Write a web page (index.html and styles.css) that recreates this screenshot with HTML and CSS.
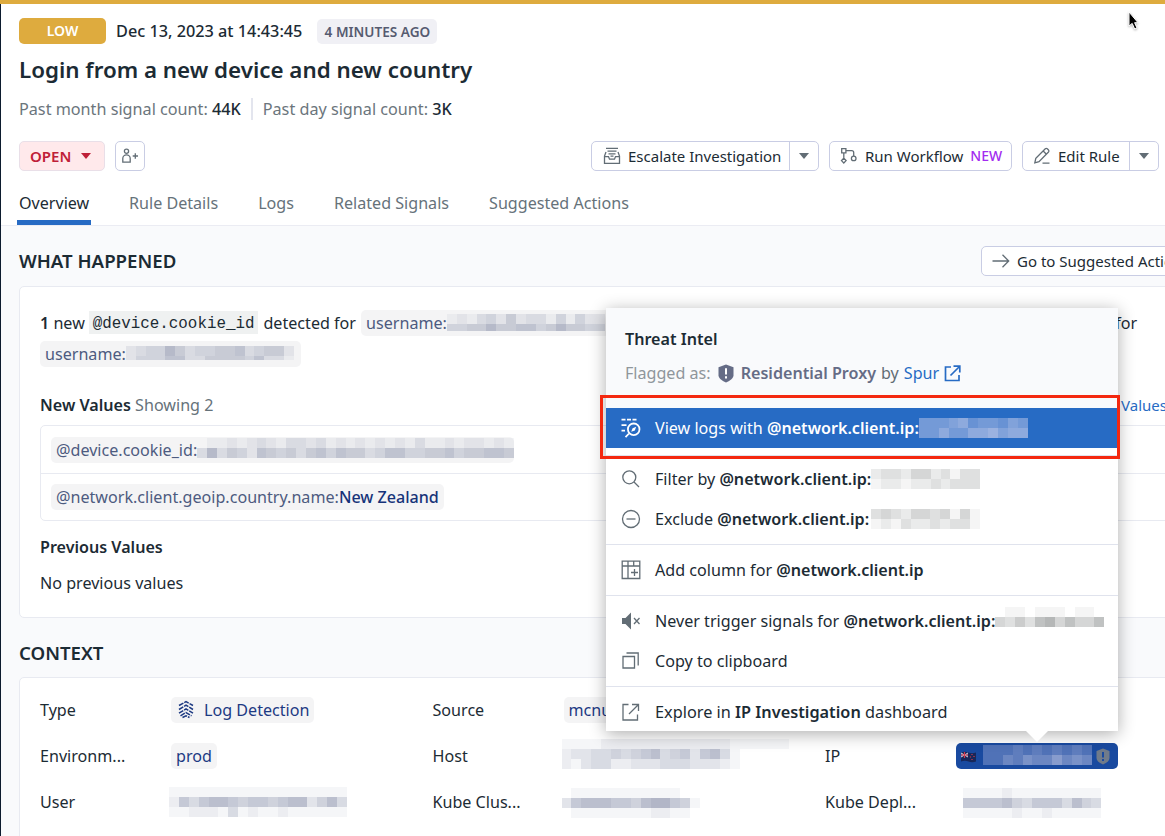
FILE: index.html
```html
<!DOCTYPE html>
<html lang="en">
<head>
<meta charset="utf-8">
<title>Login from a new device and new country</title>
<link rel="stylesheet" href="styles.css">
</head>
<body>
<div class="page">
  <header class="header">
    <div class="meta">
      <span class="severity">LOW</span>
      <span class="date">Dec 13, 2023 at 14:43:45</span>
      <span class="ago">4 MINUTES AGO</span>
    </div>
    <h1 class="title">Login from a new device and new country</h1>
    <div class="stats">
      <span>Past month signal count: <b>44K</b></span>
      <span class="stat-second">Past day signal count: <b>3K</b></span>
    </div>
    <div class="toolbar">
      <button class="status">OPEN <i class="caret"></i></button>
      <button class="btn assign">
        <svg width="18" height="18" viewBox="0 0 18 18"><circle cx="5.5" cy="4.2" r="2.1"/><path d="M1.800 15.200v-3.800a3.700 3.500 0 0 1 7.400 0v3.800zM11.700 9h5.300M14.300 6.300v5.400"/></svg>
      </button>
      <div class="actions">
        <div class="btn split escalate">
          <span class="main"><svg width="18" height="18" viewBox="0 0 18 18"><path d="M3 1.300h12M4.500 4.200h9M3 5 1.500 9v7.300h15V9L15 5M5.500 6.800h7M1.500 9.600h4l1 2.600h5l1-2.600h4M7.500 9.200h3"/></svg><span class="label">Escalate Investigation</span></span>
          <span class="drop"><i class="caret"></i></span>
        </div>
        <div class="btn workflow">
          <svg width="18" height="18" viewBox="0 0 18 18"><path d="M1.700 1.700h4.200v4.200H1.700zM3.800 6v5.300M3.800 11.200l2.300 2.400-2.300 2.400-2.300-2.400zM6 3.600h5.700a2 2 0 0 1 2 2V9"/><circle cx="13.700" cy="11.400" r="2.300"/></svg>
          <span class="label">Run Workflow</span><span class="new">NEW</span>
        </div>
        <div class="btn split edit">
          <span class="main"><svg width="18" height="18" viewBox="0 0 18 18"><path d="M1.800 15.800l1-4.500L12.300 1.800a1.500 1.500 0 0 1 2 0l1.200 1.200a1.500 1.500 0 0 1 0 2L6 14.600zM10.200 4l3.200 3.200M9.500 16.200h7"/></svg><span class="label">Edit Rule</span></span>
          <span class="drop"><i class="caret"></i></span>
        </div>
      </div>
    </div>
    <nav class="tabs">
      <a class="tab active">Overview</a><a class="tab">Rule Details</a><a class="tab">Logs</a><a class="tab">Related Signals</a><a class="tab">Suggested Actions</a>
    </nav>
  </header>

  <main class="content">
    <div class="section-head">
      <h2>WHAT HAPPENED</h2>
      <div class="btn goto"><svg width="18" height="18" viewBox="0 0 18 18"><path d="M.5 9h16M10.500 2.800 16.700 9l-6.200 6.200"/></svg><span class="label">Go to Suggested Actions</span></div>
    </div>
    <section class="card happened">
      <div class="line"><span><b>1</b> new</span> <code>@device.cookie_id</code> <span>detected for</span>
        <span class="chip key first-user">username:<span class="mosaic" data-heights="10 7" data-rows="1213425233141422,4455755664575544"></span></span>
        <span class="line-end">for</span></div>
      <div class="line"><span class="chip key second-user">username:<span class="mosaic" data-heights="10 4" data-rows="23447534455634552,24446633555546331"></span></span></div>
      <div class="values-head"><span><b>New Values</b> Showing 2</span><a class="link">View All New Values</a></div>
      <div class="table">
        <div class="tr"><span class="chip key cookie">@device.cookie_id:<span class="mosaic" data-rows="01121232133231212121213112122121,37354265453564655346644556455665"></span></span></div>
        <div class="tr"><span class="chip key">@network.client.geoip.country.name:<em>New Zealand</em></span></div>
      </div>
      <div class="prev-head">Previous Values</div>
      <div class="prev-body">No previous values</div>
    </section>

    <h2 class="context-head">CONTEXT</h2>
    <section class="card context">
      <div class="field"><span class="name">Type</span><span class="chip type"><svg width="18" height="20" viewBox="0 0 18 20"><path d="M2 5.500 9 1.700l7 3.800M2 9.500l7-4.300 7 4.300M2 13.200l7-4.300 7 4.300M3.500 15.800 9 12.500l5.500 3.300M5.500 17.500 9 15.800l3.500 1.700" stroke-dasharray="5 1"/></svg>Log Detection</span></div>
      <div class="field"><span class="name">Source</span><span class="chip">mcnulty</span></div>
      <div class="field"></div>
      <div class="field"><span class="name">Environm...</span><span class="chip">prod</span></div>
      <div class="field"><span class="name">Host</span><span class="mosaic host" data-heights="10 10 10 9" data-rows="11112222222222222111111,23344545674563674100000,21344223334443332100000,00000000000000000000000"></span></div>
      <div class="field"><span class="name">IP</span><span class="chip ip">
        <svg class="flag" width="15" height="12" viewBox="0 0 15 12"><path class="flag-bg" d="M0 1.500q4-1.500 7.500 0t7.500 0v9q-4 1.500-7.500 0T0 10.500z"/><path class="flag-white" d="M0 2l7 4M7 2 0 6M3.500 1v6M0 4h7"/><path class="flag-red" d="M3.500 1v6M0 4h7M11 3v1M13 5v1M11 8v1M9.500 5.500v1"/></svg>
        <span class="mosaic blue" data-rows="44454545454,44657668676"></span>
        <svg class="shield" width="14" height="17" viewBox="0 0 14 17"><path d="M7 .5 13.500 3v7c0 3-3 5-6.500 6.500C3.500 15 .5 13 .5 10V3z"/><path class="bang" d="M7 4v5.500M7 11v2"/></svg>
      </span></div>
      <div class="field"><span class="name">User</span><span class="mosaic user" data-rows="1111111111111111110,2646776566567735740,1122214121121111110"></span></div>
      <div class="field"><span class="name">Kube Clus...</span><span class="mosaic kube" data-rows="01111111111100,36777665788651,01111111122110"></span></div>
      <div class="field"><span class="name">Kube Depl...</span><span class="mosaic depl" data-rows="0111121111111110,0666675466647540,0111112112111110"></span></div>
    </section>
  </main>

  <div class="popup">
    <div class="intel">
      <div class="intel-title">Threat Intel</div>
      <div class="flagged"><span class="muted">Flagged as:</span><svg class="shield-lg" width="16" height="19" viewBox="0 0 16 19"><path d="M8 .5 15.500 3.300v8c0 3-3 5.200-7.500 7.200C3.500 16.500.5 14.300.5 11.300v-8z"/><path class="bang" d="M8 4.200v6.300M8 12.200v2.400"/></svg><b>Residential Proxy</b><span>by</span><a class="link">Spur</a><svg class="ext" width="17" height="17" viewBox="0 0 17 17"><path d="M7 2H1.500v13.500H15V10M6.500 10.500l9-9M9.500 1.200h6.300v6.300"/></svg></div>
    </div>
    <div class="item selected">
      <svg width="20" height="20" viewBox="0 0 20 20"><path d="M.5 1.700h4M6 1.700h4M11.500 1.700h4M.5 7.200h5M.5 12.700h3.500M8 15.500l-3.500 3.700"/><circle cx="12.700" cy="11.300" r="5.800"/><path class="needle" d="m10.200 13.800 1.400-3.600 3.600-1.400-1.400 3.600z"/></svg>
      <span>View logs with <b>@network.client.ip:</b></span><span class="mosaic blue" data-rows="66678566576,66866889788"></span>
    </div>
    <div class="group">
      <div class="item"><svg width="20" height="20" viewBox="0 0 20 20"><circle cx="8.300" cy="8.300" r="6.500"/><path d="m13 13 5 5"/></svg><span>Filter by <b>@network.client.ip:</b></span><span class="mosaic gray" data-rows="23324423133,12212232333"></span></div>
      <div class="item exclude"><svg width="20" height="20" viewBox="0 0 20 20"><circle cx="10" cy="10" r="8.500"/><path d="M5.500 10h9"/></svg><span>Exclude <b>@network.client.ip:</b></span><span class="mosaic gray" data-rows="34324434141,12132232331"></span></div>
    </div>
    <div class="group"><div class="item"><svg width="20" height="20" viewBox="0 0 20 20"><path d="M1.200 1.200h17.600v17.300H1.200zM1.200 6h17.600M7 1.200v17.300M12.700 1.200V6M10 12.500h7M13.500 9v7"/></svg><span>Add column for <b>@network.client.ip</b></span></div></div>
    <div class="group">
      <div class="item never"><svg width="20" height="20" viewBox="0 0 20 20"><path class="solid" d="M1 7h3.500L10 1.500v17L4.500 13H1z"/><path d="m13 7 5.500 6M18.500 7 13 13"/></svg><span>Never trigger signals for <b>@network.client.ip:</b></span><span class="mosaic gray" data-rows="01101110110,43536746446"></span></div>
      <div class="item"><svg width="20" height="20" viewBox="0 0 20 20"><path d="M2 5.500h11.500V17H2zM5.500 2h11.700v12.500"/></svg><span>Copy to clipboard</span></div>
    </div>
    <div class="group last"><div class="item"><svg width="20" height="20" viewBox="0 0 20 20"><path d="M7.500 2.500H2V18h14.500v-5.500M8 12l9-9M11 2.500h6.500V9"/></svg><span>Explore in <b>IP Investigation</b> dashboard</span></div></div>
    <i class="pointer"></i>
    <div class="callout"></div>
  </div>
  <svg class="cursor" width="14" height="20" viewBox="0 0 14 20"><path d="M2 1v14l3.200-2.600L7.700 18l2.300-1-2.400-5.300H11z"/></svg>
</div>
<script src="mosaic.js"></script>
</body>
</html>
```

FILE: styles.css
```css
* { box-sizing: border-box; }
body { margin: 0; font: 16.13px/24px "Noto Sans", sans-serif; color: #1c2b34; }
b { font-weight: 600; }
svg { flex: none; fill: none; stroke: #626d75; stroke-width: 1.3; }
h1, h2 { margin: 0; }
.page { position: relative; width: 1165px; height: 836px; overflow: hidden; background: #fff; border-top: 4px solid #deab3e; }
.page::before { content: ""; position: absolute; z-index: 1; left: 0; top: -4px; width: 1px; height: 836px; background: #0c1b2e; }

.header { height: 222px; padding: 14px 6px 0 19px; border-bottom: 1.5px solid #ebecf3; }
.meta { display: flex; align-items: center; height: 26px; white-space: nowrap; }
.severity { width: 87px; height: 26px; border-radius: 5px; background: #deab3e; color: #fff; font: 600 14px/26px "Noto Sans", sans-serif; text-align: center; }
.date { margin-left: 10px; font-weight: 500; font-size: 16.25px; }
.ago { margin-left: 15px; width: 120px; height: 25px; border-radius: 5px; background: #f0f0f5; color: #565b70; font: 600 13.6px/25px "Noto Sans", sans-serif; text-align: center; }
.title { margin-top: 11px; font-size: 22.350px; line-height: 30px; font-weight: 600; white-space: nowrap; }
.stats { display: flex; align-items: center; margin-top: 13px; height: 22px; color: #6b757c; white-space: nowrap; font-size: 16.2px; }
.stats b { color: #1c2b34; font-weight: 500; }
.stat-second { margin-left: 10px; padding-left: 10px; border-left: 2px solid #e3e5ee; line-height: 22px; }
.toolbar { display: flex; margin-top: 21px; height: 30px; }
.status { width: 86px; height: 30px; padding: 0 0 0 10px; border: 1px solid #e9dfe8; border-radius: 5px; background: #ffe9eb; color: #bf2038; font: 600 15px/28px "Noto Sans", sans-serif; display: flex; align-items: center; gap: 10px; }
.caret { width: 0; border: 5px solid transparent; border-top: 6px solid currentColor; border-bottom: 0; }
.btn { display: flex; align-items: center; height: 30px; border: 1px solid #c9cde4; border-radius: 5px; background: #fff; white-space: nowrap; font-size: 15px; }
.assign { width: 30px; margin-left: 10px; padding: 0 5px; }
.actions { display: flex; margin-left: auto; gap: 10px; }
.split .main { display: flex; align-items: center; flex: 1; }
.drop { width: 29px; height: 28px; display: flex; align-items: center; justify-content: center; border-left: 1px solid #c9cde4; color: #626d75; }
.escalate { width: 228px; padding-left: 11px; }
.escalate .label { margin-left: 7px; }
.workflow { width: 183px; padding-left: 10px; }
.workflow .label { margin-left: 7px; }
.new { margin-left: 7px; font-size: 14px; font-weight: 500; color: #a32bf0; }
.edit { width: 137px; padding-left: 10px; }
.edit .label { margin-left: 7px; }
.tabs { display: flex; margin-top: 17px; margin-left: -2px; gap: 36px; height: 38px; }
.tab { padding: 3px 2px 0; height: 37px; color: #66727a; white-space: nowrap; }
.active { width: 74px; color: #1c2b34; border-bottom: 5px solid #276bc4; }

.content { height: 610px; padding-left: 19px; background: #f9fafc; overflow: hidden; }
.section-head { display: flex; align-items: center; height: 60px; padding-top: 10px; }
h2 { font-size: 18.650px; line-height: 26px; font-weight: 600; }
.goto { width: 210px; flex: none; margin-left: auto; margin-right: -26px; padding-left: 10px; }
.goto .label { margin-left: 7px; }
.card { width: 1200px; background: #fff; border: 1.5px solid #e8eaf1; border-radius: 5px; }
.happened { height: 332px; padding: 20px 20px 0; }
.line { display: flex; align-items: center; height: 31px; white-space: nowrap; }
code { margin: 0 5px 0 4px; padding: 0 4px; height: 23px; background: #eff1f1; font: 15.850px/26px "Liberation Mono", monospace; }
.chip { display: inline-flex; align-items: center; height: 26px; padding: 0 5px; border-radius: 5px; background: #f4f4f5; color: #1d3a83; }
.key { color: #4d5b80; }
.key em { font-style: normal; font-weight: 500; color: #163379; }
.second-user { padding-right: 7px; }
.second-user .mosaic { margin-top: -2px; }
.first-user { margin-left: 5px; }
.line-end { margin-left: 505px; }
.values-head { display: flex; justify-content: space-between; width: 1127px; margin-top: 24px; height: 24px; color: #66727a; white-space: nowrap; }
.values-head b { color: #1c2b34; }
.link { color: #276bc4; }
.values-head .link { font-size: 15px; }
.table { margin-top: 8px; height: 96px; border: 1.5px solid #e8eaf1; border-radius: 5px; }
.tr { display: flex; align-items: center; height: 47px; padding-left: 10px; white-space: nowrap; }
.tr + .tr { border-top: 1.5px solid #e8eaf1; }
.cookie { padding-right: 0; }
.cookie .mosaic { margin-top: -4px; }
.prev-head { margin-top: 14px; font-weight: 600; font-size: 16.1px; }
.prev-body { margin-top: 12px; }
.context-head { margin-top: 22px; margin-bottom: 11px; }
.context { display: grid; grid-template-columns: 392.500px 392.500px 380px; grid-auto-rows: 46px; height: 300px; padding: 9px 20px; }
.field { display: flex; align-items: center; white-space: nowrap; }
.name { width: 131px; flex: none; }
.type { padding-left: 6px; }
.type svg { margin-right: 9px; stroke: #1d3a83; stroke-width: 1.5; }
.host { margin: 4px 0 0 -2px; }
.user { margin-left: -2px; }
.kube { margin: 2px 0 0 -2px; }
.depl { margin: 2px 0 0 -3px; }
.ip { width: 162px; background: #194aa0; }
.ip .mosaic { margin: -3px 4px 0 7px; }
.flag { stroke: none; margin-top: 2px; }
.flag-bg { fill: #172759; }
.flag-white { stroke: #dadbe6; stroke-width: 1; }
.flag-red { stroke: #d13a50; stroke-width: 1.2; }
.shield { fill: #707b8a; stroke: none; }
.bang { stroke: #194aa0; stroke-width: 2; }

.mosaic { --ink: 120, 128, 158; display: inline-flex; flex: none; flex-direction: column; }
.mosaic.gray { --ink: 108, 112, 112; }
.mosaic.blue { --ink: 220, 218, 240; }
.mosaic-row { display: flex; }
.mosaic-cell { width: 9.900px; }

.popup { position: absolute; z-index: 2; left: 606px; top: 304px; width: 512px; height: 423px; background: #fff; box-shadow: 0 3px 16px rgba(0, 0, 0, .32); white-space: nowrap; }
.intel { height: 100px; padding: 19px 19px 0; background: #f9fafc; }
.intel-title { font-weight: 600; }
.flagged { display: flex; align-items: center; margin-top: 10px; height: 24px; color: #626d75; }
.flagged .muted { color: #8f969b; }
.flagged b { margin: 0 5px 0 7px; color: #656c86; }
.flagged .link { margin: 0 5px; }
.shield-lg { margin-left: 7px; fill: #656c86; stroke: none; }
.shield-lg .bang { stroke: #fff; }
.ext { stroke: #276bc4; stroke-width: 1.7; }
.item { display: flex; align-items: center; height: 40px; padding-left: 15px; }
.item > span:nth-of-type(1) { margin-left: 14px; }
.selected { background: #276bc4; color: #fff; }
.selected svg { stroke: #fff; stroke-width: 1.800; }
.selected .needle { fill: #fff; stroke: none; }
.group { border-top: 1px solid #e0e3ed; padding: 5px 0; }
.selected + .group { margin-top: 7px; padding-top: 3px; }
.exclude .mosaic { margin-left: 2px; }
.never .mosaic { margin-top: -8px; }
.last .item { font-size: 16.300px; }
.solid { fill: #626d75; stroke: none; }
.pointer { position: absolute; left: 420px; top: 423px; border: 11px solid transparent; border-top-color: #fff; border-bottom: 0; }
.callout { position: absolute; left: -6px; top: 87px; width: 520px; height: 64px; border: 3px solid #f4280f; }
.cursor { position: absolute; z-index: 3; left: 1127px; top: 7px; fill: #000; stroke: #fff; stroke-width: 1; filter: drop-shadow(0 1px 1px rgba(0, 0, 0, .3)); }
```

FILE: mosaic.js
```js
// Fills each redacted value with a grid of translucent cells, one digit per cell.
document.querySelectorAll('.mosaic').forEach(function (el) {
  var heights = (el.dataset.heights || '').split(' ');
  el.dataset.rows.split(',').forEach(function (row, i) {
    var line = document.createElement('span');
    line.className = 'mosaic-row';
    Array.from(row).forEach(function (digit) {
      var cell = document.createElement('span');
      cell.className = 'mosaic-cell';
      cell.style.height = (heights[i] || 10) + 'px';
      cell.style.background = 'rgba(var(--ink), ' + digit / 14 + ')';
      line.appendChild(cell);
    });
    el.appendChild(line);
  });
});
```
